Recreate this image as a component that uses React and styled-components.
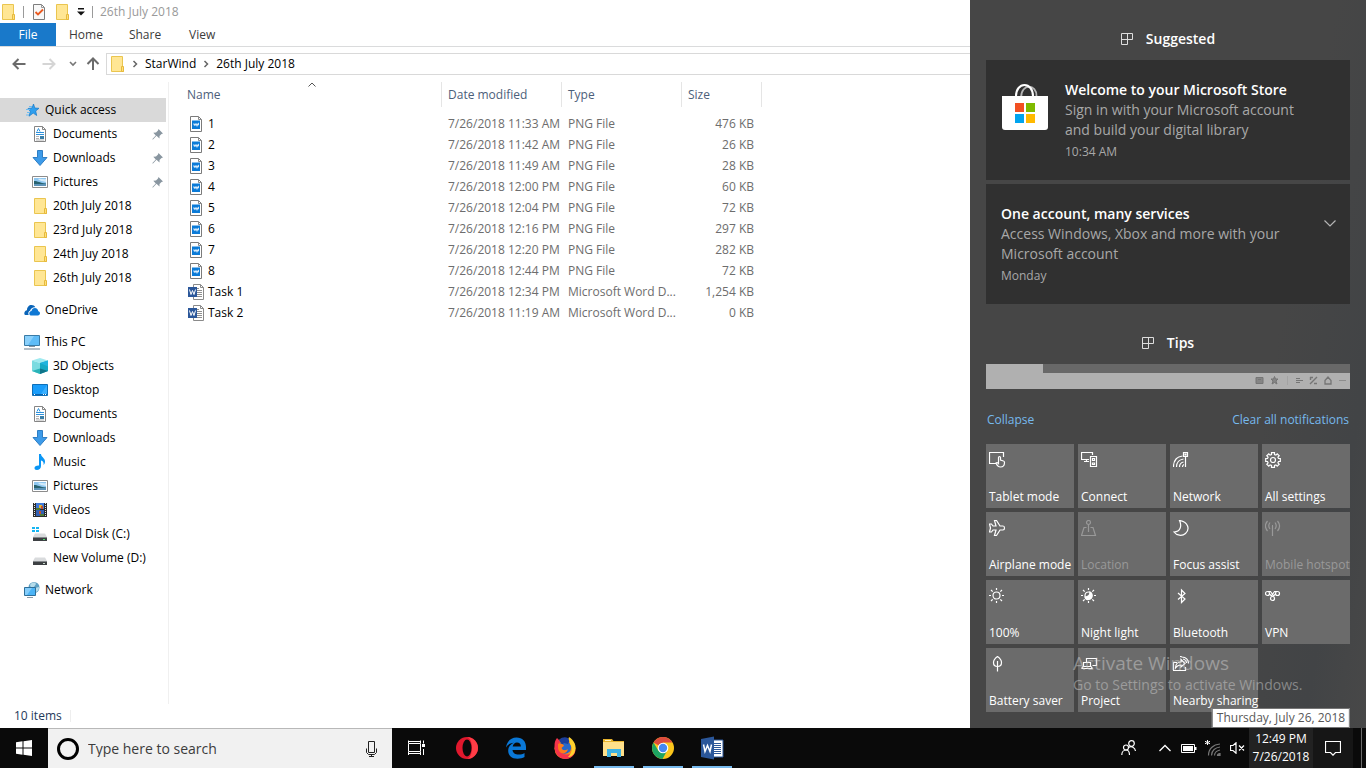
import React from 'react';
import styled, { createGlobalStyle } from 'styled-components';

const GlobalStyle = createGlobalStyle`
  * {
    box-sizing: border-box;
  }

  body {
    margin: 0;
    font-family: "Segoe UI", "Open Sans", "Noto Sans", sans-serif;
    font-size: 12px;
    line-height: 16px;
    color: #000;
    background: #fff;
  }

  button, input {
    font: inherit;
    color: inherit;
    border: 0;
    padding: 0;
    margin: 0;
    background: none;
  }

  a {
    color: inherit;
    text-decoration: none;
  }

  svg {
    display: block;
    flex: none;
  }
`;

/* ---------- icons ---------- */

const Svg = ({ w = 16, h = 16, children, ...rest }) => (
  <svg width={w} height={h} viewBox={`0 0 ${w} ${h}`} fill="none" aria-hidden="true" {...rest}>
    {children}
  </svg>
);

const FolderIcon = () => (
  <Svg>
    <path d="M2.5 .5h11v11h1v4h-12z" fill="#ffe694" stroke="#eac54f" />
    <path d="M12.5 10.5h2v5h-2z" fill="#ffe07a" stroke="#e6b93c" />
  </Svg>
);

const CheckDocIcon = () => (
  <Svg>
    <path d="M2.5 .5h8l3 3v12h-11z" fill="#f8f8f8" stroke="#7d7d7d" />
    <path d="M10.5 .5v3h3" stroke="#9a9a9a" />
    <path d="M4.500 8l2.500 2.500 5-5" stroke="#ea5a20" strokeWidth="1.800" />
  </Svg>
);

const DropIcon = () => (
  <Svg w={8} h={8}>
    <path d="M1 0h6v1.500H1zM0 3.500h8l-4 4z" fill="#111" />
  </Svg>
);

const BackIcon = ({ color = '#6b6b6b', flip }) => (
  <Svg w={14} h={12}>
    <path
      d={flip ? 'M.5 6H12M7.500 1l5 5-5 5' : 'M13.500 6H2M6.500 1L1.500 6l5 5'}
      stroke={color}
      strokeWidth="2"
    />
  </Svg>
);

const UpIcon = () => (
  <Svg w={14} h={14}>
    <path d="M7 13V2M1.500 7L7 1.500 12.500 7" stroke="#6b6b6b" strokeWidth="2" />
  </Svg>
);

const SmallDownIcon = () => (
  <Svg w={8} h={6}>
    <path d="M1 1l3 3 3-3" stroke="#777" strokeWidth="1.600" />
  </Svg>
);

const CrumbIcon = () => (
  <Svg w={6} h={8}>
    <path d="M1.500 1l3 3-3 3" stroke="#666" strokeWidth="1.500" />
  </Svg>
);

const SortIcon = () => (
  <Svg w={8} h={5}>
    <path d="M.5 4.500L4 1l3.500 3.500" stroke="#555" />
  </Svg>
);

const StarIcon = () => (
  <Svg>
    <path d="M9.500 2l1.300 4 4.200.3-3.300 2.700 1 4.500-3.500-2.400-4.200 3.100 1.300-4.800L4 6.500l4-.5z" fill="#2f9fee" stroke="#1478c8" strokeWidth=".7" />
    <path d="M5 4.500h3M2 7.500h4M3 10.500h3M2 13h3" stroke="#6cbcf2" />
  </Svg>
);

const DocumentIcon = () => (
  <Svg>
    <path d="M2.500 .5h8l3 3v12h-11z" fill="#fff" stroke="#858585" />
    <path d="M10.500 .5v3h3" stroke="#858585" />
    <path d="M4 6.500h8M4 8.500h8" stroke="#2f92dc" />
    <path d="M5 5.500l1.500-3 1.500 3" stroke="#2f92dc" />
    <path d="M4 10.500h3M4 12.500h3M4 14h8" stroke="#b3b3b3" />
    <path d="M8 10h4v3H8z" fill="#3a7fa8" />
  </Svg>
);

const DownloadIcon = () => (
  <Svg>
    <path d="M5.500 .5h5v7h4.500L8 15.500 1 7.500h4.500z" fill="#3d9be9" stroke="#2f7ec4" />
  </Svg>
);

const PictureIcon = () => (
  <Svg>
    <path d="M.5 2.500h15v11H.5z" fill="#fff" stroke="#8c8c8c" />
    <path d="M2 4h12v8H2z" fill="#8fc7f0" />
    <path d="M2 7c4 0 6 2 12 2.500v1H2z" fill="#276270" />
    <path d="M2 10h12v2H2z" fill="#5c93b8" />
    <path d="M6 5c3-1 5 1 8 0v3C11 7 9 8 6 5z" fill="#d4ebfa" />
  </Svg>
);

const CloudIcon = () => (
  <Svg>
    <path d="M.3 11.500C.3 9.500 1.500 8.500 3 8.300 3 5 5 3 7.500 3c1.800 0 3 .8 3.900 2.300-2.600-.4-4.700 1.300-5.200 3.200C4.300 9 3.800 11.500 4.700 13H2C1 13 .3 12.500.3 11.500z" fill="#0a64b8" />
    <path d="M5.300 11.700c0-1.500 1-2.500 2.200-2.600.3-1.800 1.700-3 3.400-3 1.900 0 3.200 1.300 3.400 3.200 1 .2 1.700 1 1.700 2 0 1.200-.9 2.200-2.200 2.200H7.500c-1.300 0-2.200-.8-2.200-1.800z" fill="#0f78d4" />
  </Svg>
);

const PcIcon = () => (
  <Svg>
    <path d="M.5 1.500h15v10H.5z" fill="#5fbcf7" stroke="#3a7ba6" />
    <path d="M1 2h9l-6 9H1z" fill="#8ad0fb" />
    <path d="M5 12.500h6" stroke="#8795a1" />
    <path d="M0 15h16" stroke="#9aa9b5" strokeWidth="1.500" />
  </Svg>
);

const CubeIcon = () => (
  <Svg>
    <path d="M0 2.500L8 0l8 2.500L8 5z" fill="#9feaf0" />
    <path d="M0 2.500L8 5v11l-8-3z" fill="#7adbe0" />
    <path d="M16 2.500L8 5v11l8-3z" fill="#15a9c4" />
    <path d="M0 13l8-2.500v5.500z" fill="#2ab3b8" />
    <path d="M8 10.500l8 2.500-8 3z" fill="#0f7489" />
    <path d="M8 5l8-2.500v6z" fill="#1fb4df" />
  </Svg>
);

const DesktopIcon = () => (
  <Svg>
    <path d="M.5 2.500h15v11H.5z" fill="#1a9dfa" stroke="#0e6fb8" />
    <path d="M15 3v9H9z" fill="#3bb0ff" />
    <path d="M1 12.500h14" stroke="#0a63ad" />
    <path d="M2 12.500h1M11 12.500h1M13 12.500h1" stroke="#fff" />
  </Svg>
);

const MusicIcon = () => (
  <Svg>
    <path d="M7 0h2c0 3 4 4 4 7.500 0 1.500-.5 2.500-1.500 3.500.6-2.500-.5-4-2.500-4.500V12c0 2.500-2 4-4 4s-2.500-1-2.500-2c0-1.500 1.700-2.700 4.500-2.500z" fill="#0a96f5" />
  </Svg>
);

const VideoIcon = () => (
  <Svg>
    <path d="M1 1h14v14H1z" fill="#2b2b2b" />
    <path d="M4 1h8v6H4z" fill="#3f79d8" />
    <path d="M4 8h8v6H4z" fill="#315fb4" />
    <path d="M7 3h3v3H7z" fill="#e4b52c" />
    <path d="M9 4h2v3H9zM7 9h2v3H7z" fill="#c4502b" />
    <path d="M4 6h4v2H4zM8 12h4v2H8z" fill="#4c7a35" />
    <path d="M2.500 1v14M13.500 1v14" stroke="#e6e6e6" strokeDasharray="1 1" />
  </Svg>
);

const DiskIcon = ({ windows }) => (
  <Svg>
    <path d="M3 7.500h10l2 3.500H1z" fill="#d9dbdd" />
    <path d="M1 11h14v4H1z" fill="#3d4043" />
    <path d="M1 11.500h14" stroke="#85898c" />
    <path d="M11 13.500h2" stroke={windows ? '#4be06a' : '#c7d8cb'} />
    {windows && <path d="M0 1h3v2H0zM4 1h3v2H4zM0 4h3v2H0zM4 4h3v2H4z" fill="#16b5f2" />}
  </Svg>
);

const NetworkIcon = () => (
  <Svg>
    <circle cx="10" cy="5.500" r="5.500" fill="#5d9fc2" />
    <path d="M6 3c2-3 5-3 6-1l-2 3-3 1zM11 6l4-1c0 3-1 4-3 5z" fill="#b6dcea" />
    <path d="M.5 5.500h11v8H.5z" fill="#4bb4f6" stroke="#2e6f99" />
    <path d="M1 6h7l-5 7H1z" fill="#84cdfb" />
    <path d="M3 15.500h6" stroke="#8a9aa6" />
  </Svg>
);

const PinIcon = () => (
  <Svg w={11} h={11}>
    <path d="M6.500 0L11 4.500l-1.500.5-2 2 0 2.500L4.500 6.800 1 10.500l-.8-.3L3.800 6.500 1.300 3.800 4 3.600 6 1.500z" fill="#8996a0" />
  </Svg>
);

const PngIcon = () => (
  <Svg>
    <path d="M2.500 .5h8l3 3v12h-11z" fill="#fff" stroke="#7b7b7b" />
    <path d="M10.500 .5v3h3" stroke="#8b8b8b" />
    <path d="M4 4.500h8V13H4z" fill="#0b7bd8" />
    <path d="M5.500 7l1.500 1 1-1 1 1 2-1.500V9.500L10 9l-1 2-1-2-1 1-1.500-1z" fill="#d5eafb" />
  </Svg>
);

const WordFileIcon = () => (
  <Svg>
    <path d="M5.500 .5h7l3 3v12h-10z" fill="#fff" stroke="#8a8a8a" />
    <path d="M12.500 .5v3h3" stroke="#8a8a8a" />
    <path d="M9 4.500h2M9 6.500h5M9 8.500h5M9 10.500h5M9 12.500h5" stroke="#8f8f8f" />
    <path d="M0 3h9v10H0z" fill="#2b579a" />
    <path d="M1.500 5.500L3 10.500l1.500-4 1.500 4 1.500-5" stroke="#fff" />
  </Svg>
);

const GroupIcon = () => (
  <Svg w={12} h={12} stroke="#ddd">
    <path d="M.5 .5h11v6H.5zM.5 6v5.500h6V.5" />
  </Svg>
);

const BagIcon = () => (
  <Svg w={48} h={51}>
    <path d="M20 18C20 2.500 36 4 35.500 16" stroke="#b5b5b5" strokeWidth="1.800" />
    <path d="M15 17C14.500 1 32.500 1 32 17" stroke="#fff" strokeWidth="2" />
    <path d="M1 16h46v31a3 3 0 01-3 3H4a3 3 0 01-3-3z" fill="#fff" />
    <path d="M14 23h9v9h-9z" fill="#f25022" />
    <path d="M25 23h9v9h-9z" fill="#7fba00" />
    <path d="M14 34h9v9h-9z" fill="#00a4ef" />
    <path d="M25 34h9v9h-9z" fill="#ffb900" />
  </Svg>
);

const ExpandIcon = () => (
  <Svg w={12} h={7}>
    <path d="M.5 .5L6 6 11.500 .5" stroke="#b5b5b5" strokeWidth="1.200" />
  </Svg>
);

const BrowserIcons = () => (
  <Svg w={92} h={12} stroke="#757575">
    <path d="M1 2.500h7v6H1z" fill="#858585" />
    <path d="M3 4.500h3" />
    <path d="M19.500 1.500l1 2.500h2.500l-2 2 1 3-2.500-1.500L17 9l1-3-2-2h2.500z" fill="#858585" />
    <path d="M32.500 1v9" stroke="#a3a3a3" />
    <path d="M41 3.500h4M41 5.500h7M41 7.500h4" />
    <path d="M55 9l7-7M55 2.500h3M55.500 2v3M59 8.500h3" strokeWidth="1.400" />
    <path d="M70 5.500l3-3.500 3 3.500v3.500h-6z" strokeWidth="1.300" />
    <path d="M84 5.500h7" stroke="#8d8d8d" />
  </Svg>
);

const tileIcons = {
  tablet: (
    <>
      <path d="M7 11.500H.5V.5h14V5" />
      <path d="M9.500 10V5.500a1 1 0 012 0V8l3 1c.8.2 1 .8 1 1.500 0 3-1 4.500-4 4.500-2 0-3.500-1.500-4.500-4 .8-.8 1.700-.3 2.500.5z" />
    </>
  ),
  connect: (
    <>
      <path d="M8 7.500H.5V.5h11V3M3 9.500h5M5.500 7.500v2" />
      <path d="M9.500 4.500h6v10h-6zM11.500 6.500h2v2h-2zM11.500 11h2v1.500h-2z" />
    </>
  ),
  network: (
    <>
      <path d="M.5 15C.5 8 4 4.500 9.500 4M3.500 15c0-4.500 3-7.500 7-8M6.500 15c0-3 2-4.500 4-5M9.500 15c0-1 .5-2 1.500-2.500" />
      <path d="M10.500 .5h4v4h-4zM12.500 4.500V15" />
      <path d="M12 2h1v1h-1z" />
    </>
  ),
  settings: (
    <>
      <path d="M6.500 .7h3v1.800l1.400.6 1.300-1.300 2 2-1.300 1.300.6 1.400h1.800v3h-1.800l-.6 1.400 1.300 1.300-2 2-1.300-1.300-1.400.6v1.800h-3v-1.800l-1.400-.6-1.300 1.300-2-2 1.300-1.300-.6-1.400H.7v-3h1.800l.6-1.400-1.300-1.300 2-2 1.300 1.300 1.400-.6z" />
      <circle cx="8" cy="8" r="2.500" />
    </>
  ),
  airplane: (
    <path d="M5.500 .5h2l3.500 5.500h3c2 0 2 4 0 4h-3l-3.500 5.500h-2L7 10H4l-1.500 2h-2L1.500 8 .5 4h2L4 6h3z" />
  ),
  location: (
    <>
      <circle cx="7.500" cy="2.500" r="2" />
      <path d="M7.500 4.500V12M5.500 7.500H3l-2.500 8h14l-2.500-8H9.500" />
    </>
  ),
  moon: (
    <path d="M6.500 .5c9 1.500 10.500 9 6 13-3.500 3-9 2-11.500-1.500C7.500 12 9 6 6.500 .5z" />
  ),
  hotspot: (
    <>
      <path d="M7.500 6v10M7 5.500h1" />
      <path d="M5 2.500c-1.500 2-1.500 4.500 0 6.500M2.500 1C0 4 0 8 2.500 11M10 2.500c1.500 2 1.500 4.500 0 6.500M12.500 1c2.500 3 2.500 7 0 10" />
    </>
  ),
  sun: (
    <>
      <circle cx="7.500" cy="7.500" r="3.500" />
      <path d="M7.500 0v2M7.500 13v2M0 7.500h2M13 7.500h2M2 2l1.700 1.700M11.300 11.300L13 13M13 2l-1.700 1.700M2 13l1.700-1.700" />
    </>
  ),
  night: (
    <>
      <circle cx="7.500" cy="7.500" r="3.500" />
      <path d="M9 4c0 3-2 5-5 5 1 4 7 3 7-1.500C11 5.500 10 4.500 9 4z" fill="currentColor" />
      <path d="M7.500 0v2M7.500 13v2M0 7.500h2M13 7.500h2M2 2l1.700 1.700M11.300 11.300L13 13M13 2l-1.700 1.700M2 13l1.700-1.700" />
    </>
  ),
  bluetooth: <path d="M5 5l7 6-3.500 3.500V2L12 5.500 5 11.500" />,
  vpn: (
    <>
      <circle cx="2.500" cy="5.500" r="2" />
      <circle cx="12.500" cy="5.500" r="2" />
      <circle cx="7.500" cy="10.500" r="2" />
      <path d="M3 3.500h2.500L9 8.500M12 3.500H9.500L6 8.500M4.500 6l1.500 1.500M10.500 6L9 7.500" />
    </>
  ),
  leaf: (
    <path d="M8.500 15.500V5M8.500 .5C5 3 4.500 4.500 4.500 6.500c0 2.500 1.500 4 4 4s4-1.500 4-4c0-2-.5-3.500-4-6z" />
  ),
  project: (
    <>
      <path d="M5.500 6V2.500h10v7h-4" />
      <path d="M2.500 10.500v-4h7v4zM.5 12.500h11M.5 12.500l1.500-2h8l1.500 2" />
    </>
  ),
  share: (
    <>
      <path d="M4 6.500H.5v8h12V11M2.500 12c0-4 2.500-6 5.500-6V3.500L12 7.500 8 11V9c-2.500 0-4 .8-5.500 3z" />
      <path d="M9 1c4 0 6.500 3 6.500 6.500M10 3c2 .5 3.500 2 3.500 4M7 .5c1 0 1 0 2 .5" />
    </>
  ),
};

/* ---------- explorer ---------- */

const Screen = styled.div`
  display: flex;
  flex-direction: column;
  min-height: 100vh;
`;

const Workspace = styled.div`
  display: flex;
  flex: 1;
`;

const Explorer = styled.main`
  display: flex;
  flex: 1;
  flex-direction: column;
  min-width: 0;
  background: #fff;
`;

const TitleBar = styled.header`
  display: flex;
  align-items: center;
  height: 23px;
  gap: 7px;
  color: #999;

  & > button {
    display: flex;
  }
`;

const Divider = styled.span`
  width: 1px;
  height: 12px;
  background: #9a9a9a;
`;

const Ribbon = styled.nav`
  display: flex;
  height: 24px;
  border-bottom: 1px solid #dadbdc;
`;

const RibbonTab = styled.button`
  min-width: 56px;
  padding: 0 13px;
  color: ${(p) => (p.$file ? '#fff' : '#3b3b3b')};
  background: ${(p) => (p.$file ? '#1979ca' : 'transparent')};
`;

const NavBar = styled.div`
  display: flex;
  align-items: center;
  height: 34px;
  padding-left: 2px;
`;

const NavButton = styled.button`
  display: flex;
  justify-content: center;
  width: ${(p) => p.$width}px;
`;

const AddressBar = styled.div`
  display: flex;
  flex: 1;
  align-items: center;
  gap: 7px;
  height: 22px;
  margin-left: 4px;
  padding-left: 2px;
  border: 1px solid #d9d9d9;
  border-right: 0;
`;

const Body = styled.div`
  display: flex;
  flex: 1;
  padding-top: 1px;
`;

const Sidebar = styled.aside`
  width: 169px;
  padding: 16px 2px 0 0;
  border-right: 1px solid #f0f0f0;
`;

const TreeGroup = styled.ul`
  margin: 0 0 8px;
  padding: 0;
  list-style: none;
`;

const TreeItem = styled.a`
  display: flex;
  align-items: center;
  gap: 5px;
  height: 24px;
  padding: 0 3px 0 ${(p) => (p.$root ? 24 : 32)}px;
  white-space: nowrap;
  background: ${(p) => (p.$active ? '#d9d9d9' : 'transparent')};

  & > span {
    flex: 1;
  }
`;

const FileTable = styled.table`
  align-self: flex-start;
  width: 593px;
  table-layout: fixed;
  border-collapse: collapse;
`;

const HeadCell = styled.th`
  width: ${(p) => p.$width}px;
  padding: 0 0 6px;
  font-weight: normal;
`;

const HeadButton = styled.button`
  display: flex;
  align-items: center;
  gap: 87px;
  width: 100%;
  height: 25px;
  padding-left: ${(p) => (p.$first ? 18 : 6)}px;
  color: #4c607a;
  border-right: 1px solid #e5e5e5;

  & > svg {
    align-self: flex-start;
  }
`;

const Cell = styled.td`
  height: 21px;
  padding: 0 ${(p) => (p.$right ? 8 : 0)}px 0 6px;
  color: #6d6d6d;
  text-align: ${(p) => (p.$right ? 'right' : 'left')};
  white-space: nowrap;
`;

const FileName = styled.div`
  display: flex;
  align-items: center;
  gap: 4px;
  padding-left: 13px;
  color: #000;
`;

const StatusBar = styled.footer`
  display: flex;
  align-items: center;
  gap: 8px;
  height: 24px;
  padding-left: 14px;
  color: #1e395b;

  & > i {
    width: 1px;
    height: 12px;
    background: #eee;
  }
`;

/* ---------- action center ---------- */

const ActionCenter = styled.aside`
  position: relative;
  display: flex;
  flex-direction: column;
  width: 396px;
  padding: 18px 16px 16px;
  color: #fff;
  background: linear-gradient(100deg, #464646 70%, #424446 88%, #484848);
`;

const GroupTitle = styled.h2`
  display: flex;
  align-items: center;
  justify-content: center;
  gap: 13px;
  height: 42px;
  margin: 0;
  font-size: 14px;
  font-weight: 600;
`;

const Card = styled.article`
  display: flex;
  gap: 16px;
  min-height: 120px;
  margin-bottom: 4px;
  padding: 20px 14px 12px 15px;
  background: #303030;
`;

const CardText = styled.div`
  flex: 1;
  color: #a8a8a8;
  font-size: 14px;
  line-height: 20px;

  & > h3 {
    margin: 0;
    color: #fff;
    font-size: 14px;
    font-weight: 600;
  }

  & > p {
    margin: 0;
  }

  & > time {
    display: block;
    font-size: 12px;
    line-height: 24px;
  }
`;

const ExpandButton = styled.button`
  align-self: flex-start;
  padding-top: 16px;
`;

const TipsTitle = styled(GroupTitle)`
  margin-top: 14px;
`;

const TipImage = styled.div`
  height: 25px;
  background: #b0b0b0;
`;

const TipTabs = styled.div`
  height: 9px;
  margin-left: 57px;
  background: #686868;
`;

const TipTools = styled.div`
  display: flex;
  justify-content: flex-end;
  padding: 2px 3px 0 0;
`;

const PanelLinks = styled.div`
  display: flex;
  justify-content: space-between;
  margin: 23px 1px 16px;
  color: #76b9ed;
`;

const Tiles = styled.div`
  display: grid;
  grid-template-columns: repeat(4, 1fr);
  gap: 4px;
  margin-top: auto;
`;

const Tile = styled.button`
  display: flex;
  flex-direction: column;
  justify-content: space-between;
  min-width: 0;
  height: 64px;
  padding: 8px 0 3px 3px;
  color: ${(p) => (p.disabled ? '#999' : '#fff')};
  text-align: left;
  white-space: nowrap;
  background: #6b6b6b;
`;

const Watermark = styled.div`
  position: absolute;
  bottom: 33px;
  left: 103px;
  color: rgba(205, 205, 205, 0.5);
  font-size: 14px;
  line-height: 20px;
  white-space: nowrap;
  pointer-events: none;

  & > strong {
    display: block;
    font-size: 19px;
    font-weight: normal;
    line-height: 24px;
  }
`;

/* ---------- taskbar ---------- */

const Taskbar = styled.footer`
  display: flex;
  height: 40px;
  color: #fff;
  background: #0a0a0a;
`;

const TaskButton = styled.button`
  display: flex;
  align-items: center;
  justify-content: center;
  width: ${(p) => p.$width || 48}px;
  height: 40px;
  background: ${(p) => (p.$lit ? '#161616' : 'transparent')};
`;

const SearchBox = styled.label`
  display: flex;
  align-items: center;
  gap: 8px;
  width: 344px;
  padding: 0 14px 0 8px;
  color: #2b2b2b;
  background: #f1f1f1;
  border-top: 1px solid #b8b8b8;

  & > input {
    flex: 1;
    min-width: 0;
    font-size: 14px;
    outline: none;
  }

  & > input::placeholder {
    color: #3c3c3c;
    opacity: 1;
  }
`;

const Apps = styled.div`
  display: flex;
  flex: 1;
  gap: 1px;
  margin-left: 3px;
`;

const AppButton = styled(TaskButton)`
  padding-top: 2px;
  border-bottom: 2px solid transparent;
  background: ${(p) => (p.$open ? 'linear-gradient(#76b9ed, #76b9ed) center bottom / 40px 2px no-repeat border-box' : 'none')};
`;

const Tray = styled.div`
  display: flex;
  align-items: center;
`;

const TrayButton = styled.button`
  display: flex;
  align-items: center;
  justify-content: center;
  width: ${(p) => p.$width || 24}px;
  height: 40px;
`;

const Clock = styled.button`
  position: relative;
  width: 64px;
  height: 40px;
  line-height: 18px;
  background: #222;

  & > time {
    display: block;
  }
`;

const Tooltip = styled.span`
  position: absolute;
  bottom: 40px;
  left: 50%;
  padding: 0 4px;
  color: #575757;
  line-height: 18px;
  white-space: nowrap;
  background: #fff;
  border: 1px solid #767676;
  transform: translateX(-50%);
`;

const ShowDesktop = styled.button`
  width: 5px;
  height: 40px;
  margin-left: 8px;
  border-left: 1px solid #6a6a6a;
`;

const tree = [
  [
    { label: 'Quick access', icon: <StarIcon />, root: true, active: true },
    { label: 'Documents', icon: <DocumentIcon />, pinned: true },
    { label: 'Downloads', icon: <DownloadIcon />, pinned: true },
    { label: 'Pictures', icon: <PictureIcon />, pinned: true },
    { label: '20th July 2018', icon: <FolderIcon /> },
    { label: '23rd July 2018', icon: <FolderIcon /> },
    { label: '24th Juy 2018', icon: <FolderIcon /> },
    { label: '26th July 2018', icon: <FolderIcon /> },
  ],
  [{ label: 'OneDrive', icon: <CloudIcon />, root: true }],
  [
    { label: 'This PC', icon: <PcIcon />, root: true },
    { label: '3D Objects', icon: <CubeIcon /> },
    { label: 'Desktop', icon: <DesktopIcon /> },
    { label: 'Documents', icon: <DocumentIcon /> },
    { label: 'Downloads', icon: <DownloadIcon /> },
    { label: 'Music', icon: <MusicIcon /> },
    { label: 'Pictures', icon: <PictureIcon /> },
    { label: 'Videos', icon: <VideoIcon /> },
    { label: 'Local Disk (C:)', icon: <DiskIcon windows /> },
    { label: 'New Volume (D:)', icon: <DiskIcon /> },
  ],
  [{ label: 'Network', icon: <NetworkIcon />, root: true }],
];

const files = [
  ['1', '7/26/2018 11:33 AM', 'PNG File', '476 KB'],
  ['2', '7/26/2018 11:42 AM', 'PNG File', '26 KB'],
  ['3', '7/26/2018 11:49 AM', 'PNG File', '28 KB'],
  ['4', '7/26/2018 12:00 PM', 'PNG File', '60 KB'],
  ['5', '7/26/2018 12:04 PM', 'PNG File', '72 KB'],
  ['6', '7/26/2018 12:16 PM', 'PNG File', '297 KB'],
  ['7', '7/26/2018 12:20 PM', 'PNG File', '282 KB'],
  ['8', '7/26/2018 12:44 PM', 'PNG File', '72 KB'],
  ['Task 1', '7/26/2018 12:34 PM', 'Microsoft Word D...', '1,254 KB'],
  ['Task 2', '7/26/2018 11:19 AM', 'Microsoft Word D...', '0 KB'],
];

const tiles = [
  ['Tablet mode', 'tablet'],
  ['Connect', 'connect'],
  ['Network', 'network'],
  ['All settings', 'settings'],
  ['Airplane mode', 'airplane'],
  ['Location', 'location', true],
  ['Focus assist', 'moon'],
  ['Mobile hotspot', 'hotspot', true],
  ['100%', 'sun'],
  ['Night light', 'night'],
  ['Bluetooth', 'bluetooth'],
  ['VPN', 'vpn'],
  ['Battery saver', 'leaf'],
  ['Project', 'project'],
  ['Nearby sharing', 'share'],
];

const FileExplorer = () => (
  <Explorer>
    <TitleBar>
      <FolderIcon />
      <Divider />
      <button aria-label="Properties"><CheckDocIcon /></button>
      <button aria-label="New folder"><FolderIcon /></button>
      <button aria-label="Customize toolbar"><DropIcon /></button>
      <Divider />
      <span>26th July 2018</span>
    </TitleBar>
    <Ribbon>
      <RibbonTab $file>File</RibbonTab>
      <RibbonTab>Home</RibbonTab>
      <RibbonTab>Share</RibbonTab>
      <RibbonTab>View</RibbonTab>
    </Ribbon>
    <NavBar>
      <NavButton $width={34} aria-label="Back"><BackIcon /></NavButton>
      <NavButton $width={26} aria-label="Forward"><BackIcon color="#d5d5d5" flip /></NavButton>
      <NavButton $width={22} aria-label="Recent locations"><SmallDownIcon /></NavButton>
      <NavButton $width={18} aria-label="Up"><UpIcon /></NavButton>
      <AddressBar>
        <FolderIcon />
        <CrumbIcon />
        <button>StarWind</button>
        <CrumbIcon />
        <button>26th July 2018</button>
      </AddressBar>
    </NavBar>
    <Body>
      <Sidebar>
        {tree.map((group) => (
          <TreeGroup key={group[0].label}>
            {group.map((item) => (
              <li key={item.label}>
                <TreeItem href="#" $root={item.root} $active={item.active}>
                  {item.icon}
                  <span>{item.label}</span>
                  {item.pinned && <PinIcon />}
                </TreeItem>
              </li>
            ))}
          </TreeGroup>
        ))}
      </Sidebar>
      <FileTable>
        <thead>
          <tr>
            <HeadCell $width={273}><HeadButton $first>Name<SortIcon /></HeadButton></HeadCell>
            <HeadCell $width={120}><HeadButton>Date modified</HeadButton></HeadCell>
            <HeadCell $width={120}><HeadButton>Type</HeadButton></HeadCell>
            <HeadCell $width={80}><HeadButton>Size</HeadButton></HeadCell>
          </tr>
        </thead>
        <tbody>
          {files.map(([name, date, type, size]) => (
            <tr key={name}>
              <Cell>
                <FileName>
                  {type === 'PNG File' ? <PngIcon /> : <WordFileIcon />}
                  {name}
                </FileName>
              </Cell>
              <Cell>{date}</Cell>
              <Cell>{type}</Cell>
              <Cell $right>{size}</Cell>
            </tr>
          ))}
        </tbody>
      </FileTable>
    </Body>
    <StatusBar>
      10 items
      <i />
    </StatusBar>
  </Explorer>
);

const Notifications = () => (
  <ActionCenter>
    <GroupTitle><GroupIcon />Suggested</GroupTitle>
    <Card>
      <BagIcon />
      <CardText>
        <h3>Welcome to your Microsoft Store</h3>
        <p>Sign in with your Microsoft account<br />and build your digital library</p>
        <time>10:34 AM</time>
      </CardText>
    </Card>
    <Card>
      <CardText>
        <h3>One account, many services</h3>
        <p>Access Windows, Xbox and more with your<br />Microsoft account</p>
        <time>Monday</time>
      </CardText>
      <ExpandButton aria-label="Expand"><ExpandIcon /></ExpandButton>
    </Card>
    <TipsTitle><GroupIcon />Tips</TipsTitle>
    <TipImage>
      <TipTabs />
      <TipTools><BrowserIcons /></TipTools>
    </TipImage>
    <PanelLinks>
      <a href="#">Collapse</a>
      <a href="#">Clear all notifications</a>
    </PanelLinks>
    <Tiles>
      {tiles.map(([label, icon, disabled]) => (
        <Tile key={label} disabled={disabled}>
          <Svg w={17} h={17} stroke="currentColor" strokeWidth="1.200">{tileIcons[icon]}</Svg>
          {label}
        </Tile>
      ))}
    </Tiles>
    <Watermark>
      <strong>Activate Windows</strong>
      Go to Settings to activate Windows.
    </Watermark>
  </ActionCenter>
);

const SystemTaskbar = () => (
  <Taskbar>
    <TaskButton aria-label="Start">
      <Svg>
        <path d="M0 2.300L6.500 1.300v6.200H0zM7.500 1.200L16 0v7.500H7.500zM0 8.500h6.500v6.200L0 13.700zM7.500 8.500H16V16l-8.500-1.200z" fill="#fff" />
      </Svg>
    </TaskButton>
    <SearchBox>
      <Svg w={24} h={24}><circle cx="12" cy="12" r="9.500" stroke="#000" strokeWidth="3" /></Svg>
      <input type="text" aria-label="Search" placeholder="Type here to search" />
      <Svg w={13} h={16} stroke="#222">
        <path d="M3.500 .5h6v11h-6zM1.500 7.500v4l2 2h6l2-2v-4M6.500 13.500v2M4 15.500h5" />
      </Svg>
    </SearchBox>
    <TaskButton aria-label="Task view">
      <Svg w={17} h={16} stroke="#fff">
        <path d="M.5 3.500h12v8H.5zM.5 3V.5M12.500 3V.5M.5 12v3M12.500 12v3M.5 1.500h12M.5 13.500h12M15.500 .5v3M15.500 9v6" />
        <path d="M14 4h3v3h-3z" fill="#fff" stroke="none" />
      </Svg>
    </TaskButton>
    <Apps>
      <AppButton aria-label="Opera">
        <Svg w={24} h={24}>
          <circle cx="12" cy="12" r="11" fill="#e0182d" />
          <path d="M12 1c6 0 11 5 11 11s-5 11-11 11c3-1 5-5 5-11S15 2 12 1z" fill="#ff3d46" />
          <ellipse cx="12" cy="12" rx="4.500" ry="8.500" fill="#0a0a0a" />
        </Svg>
      </AppButton>
      <AppButton aria-label="Edge">
        <Svg w={22} h={22}>
          <path d="M1 10.500C2 4 6 .5 11.500 .5 17.500 .5 21 4.500 21 10v3H7.500c.3 3.200 3 4.500 6 4.500 2.500 0 4.500-.7 6-1.600V20c-1.800 1-4.200 1.700-7 1.700-6 0-9.300-3.300-9.300-8 0-3.700 2.300-6.500 5.800-7.900C4.800 6 2.500 7.800 1 10.500zM7.700 9.500h8.200C15.900 7 14.300 5.500 12 5.500S8 7.200 7.700 9.500z" fill="#0a78d7" />
        </Svg>
      </AppButton>
      <AppButton aria-label="Firefox">
        <Svg w={24} h={24}>
          <circle cx="12" cy="12.500" r="10.500" fill="#ff8a16" />
          <path d="M1.500 10C1 18 7 23.500 13 23c6-.5 9.500-5 9.500-9.500C19 20 9 20 7 14c-2-4 0-6 0-9L4 2C2.500 4 1.500 6 1.500 10z" fill="#f5334a" />
          <circle cx="12" cy="11.500" r="6.200" fill="#2768c9" />
          <path d="M6 4c4-4 9-3 11 0l-2 4-4-1-2 2z" fill="#1c3f9b" />
          <path d="M16 1c5 3 8 9 6 14-1 4-4 6-7 6 4-4 5-9 2-13 0-3-2-4-1-7z" fill="#ffd22e" />
          <path d="M5 8c2-1 5 0 6 1.500-1 2-3 1.500-2 3.500 1.500 2 5 1 6 0-1 6-10 6-10-2z" fill="#ff7b1a" />
        </Svg>
      </AppButton>
      <AppButton $open aria-label="File Explorer">
        <Svg w={24} h={24}>
          <path d="M1 3h9l1.500 2H22v3H1z" fill="#e7b32c" />
          <path d="M1 6h21v14H1z" fill="#ffe08a" />
          <path d="M3 4.500h6" stroke="#fff3c8" />
          <path d="M5 21v-8h14v8h-4v-4H9v4z" fill="#3eb3e4" />
        </Svg>
      </AppButton>
      <AppButton $open aria-label="Chrome">
        <Svg w={24} h={24}>
          <circle cx="12" cy="12" r="11" fill="#fbc51c" />
          <path d="M12 12L2.500 6.500A11 11 0 0121.500 6.500H12z" fill="#dd4b3e" />
          <path d="M2.500 6.500a11 11 0 009 16.500l4.700-8.500L7.500 15z" fill="#1da462" />
          <circle cx="12" cy="12" r="5.300" fill="#fff" />
          <circle cx="12" cy="12" r="4.200" fill="#4688f1" />
        </Svg>
      </AppButton>
      <AppButton $open aria-label="Word">
        <Svg w={24} h={24}>
          <path d="M13 4h10v17H13z" fill="#fff" stroke="#2b579a" />
          <path d="M14 7.500h7M14 9.500h7M14 11.500h7M14 13.500h7M14 15.500h7M14 17.500h7" stroke="#2b579a" />
          <path d="M1 3l13-2.500v23L1 21z" fill="#2b579a" />
          <path d="M3.500 8.500l1.500 7 2.500-6 2.500 6 1.500-7" stroke="#fff" strokeWidth="1.500" />
        </Svg>
      </AppButton>
    </Apps>
    <Tray>
      <TrayButton $width={48} aria-label="People">
        <Svg stroke="#fff" strokeWidth="1.200">
          <circle cx="10.500" cy="3.500" r="2.800" />
          <circle cx="5" cy="7.500" r="2.500" />
          <path d="M.8 15c0-3 2-5 4.200-5s3.500 2 3.500 5M7.500 7.500c3-2 6.500 0 7 3.500" />
        </Svg>
      </TrayButton>
      <TrayButton aria-label="Show hidden icons">
        <Svg w={12} h={8} stroke="#fff" strokeWidth="1.300"><path d="M.5 7L6 1.500 11.500 7" /></Svg>
      </TrayButton>
      <TrayButton aria-label="Battery">
        <Svg w={16} h={9}>
          <path d="M.5 .5h13v8H.5z" stroke="#fff" />
          <path d="M2 2h10v5H2zM14 3h1.500v3H14z" fill="#fff" />
        </Svg>
      </TrayButton>
      <TrayButton aria-label="Wireless">
        <Svg stroke="#777" strokeWidth="1.200">
          <path d="M3.500 15.500C3.500 9 8 4.500 15 4M6.500 15.500c0-5 4-8 8.500-8.500M9.500 15.500c0-3 3-5 5.500-5.500" />
          <path d="M12.500 15.500c0-1 1-2 2.500-2v2z" fill="#777" />
          <path d="M2.500 0v5M0 1.300l5 2.500M5 1.300L0 3.800" stroke="#fff" strokeWidth="1" />
        </Svg>
      </TrayButton>
      <TrayButton aria-label="Volume muted">
        <Svg w={15} h={12} stroke="#fff" strokeWidth="1.200">
          <path d="M.5 3.500h2.500L6 .8v10.400L3 8.500H.5zM9 3.500l5 5M14 3.500l-5 5" />
        </Svg>
      </TrayButton>
      <Clock>
        <time>12:49 PM</time>
        <time>7/26/2018</time>
        <Tooltip role="tooltip">Thursday, July 26, 2018</Tooltip>
      </Clock>
      <TaskButton $lit $width={40} aria-label="Notifications">
        <Svg stroke="#fff" strokeWidth="1.200"><path d="M.5 1.500h15v11h-5L8 15.200l-2.500-2.700h-5z" /></Svg>
      </TaskButton>
      <ShowDesktop aria-label="Show desktop" />
    </Tray>
  </Taskbar>
);

export default function App() {
  return (
    <Screen>
      <GlobalStyle />
      <Workspace>
        <FileExplorer />
        <Notifications />
      </Workspace>
      <SystemTaskbar />
    </Screen>
  );
}
